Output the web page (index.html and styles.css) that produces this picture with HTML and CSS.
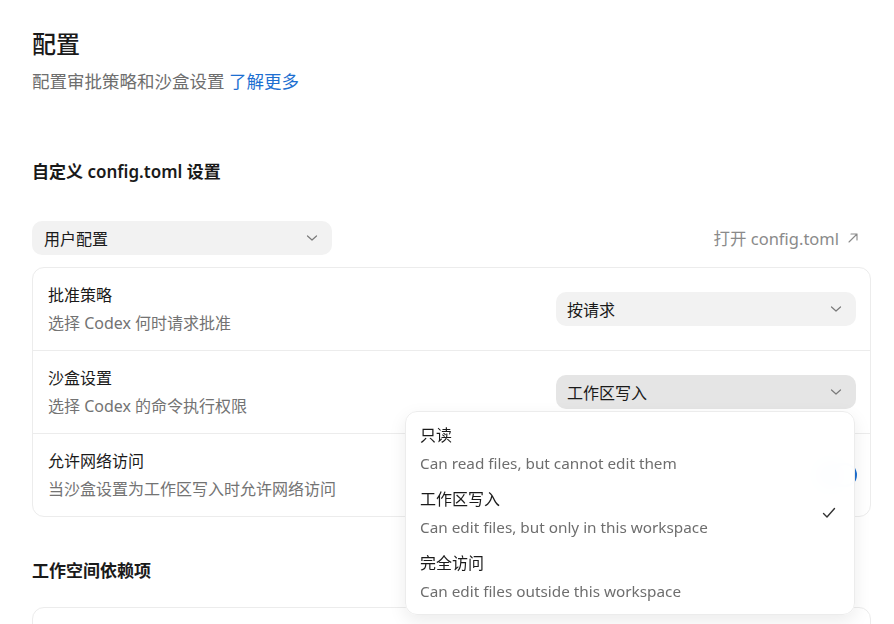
FILE: index.html
```html
<!DOCTYPE html>
<html lang="zh-CN">
<head>
<meta charset="utf-8">
<title>配置</title>
<link rel="stylesheet" href="styles.css">
</head>
<body>
<main class="page">
  <header class="head">
    <h1 class="title">配置</h1>
    <p class="subtitle">配置审批策略和沙盒设置 <a class="link" href="#">了解更多</a></p>
  </header>

  <h2 class="section">自定义 config.toml 设置</h2>

  <div class="toolbar">
    <div class="select select-wide">
      <span>用户配置</span>
      <svg class="chev" viewBox="0 0 12 8" width="12" height="8"><path d="M1.5 2 6 6 10.5 2" fill="none" stroke="currentColor" stroke-width="1.2" stroke-linecap="round" stroke-linejoin="round"/></svg>
    </div>
    <a class="open" href="#">打开 config.toml
      <svg class="arrow" viewBox="0 0 12 12" width="12" height="12"><path d="M2 10 10 2M4 2h6v6" fill="none" stroke="currentColor" stroke-width="1.1" stroke-linecap="round" stroke-linejoin="round"/></svg>
    </a>
  </div>

  <section class="card">
    <div class="row">
      <div class="text">
        <div class="row-title">批准策略</div>
        <div class="row-desc">选择 Codex 何时请求批准</div>
      </div>
      <div class="select">
        <span>按请求</span>
        <svg class="chev" viewBox="0 0 12 8" width="12" height="8"><path d="M1.5 2 6 6 10.5 2" fill="none" stroke="currentColor" stroke-width="1.2" stroke-linecap="round" stroke-linejoin="round"/></svg>
      </div>
    </div>
    <div class="row">
      <div class="text">
        <div class="row-title">沙盒设置</div>
        <div class="row-desc">选择 Codex 的命令执行权限</div>
      </div>
      <div class="select-wrap">
        <div class="select active">
          <span>工作区写入</span>
          <svg class="chev" viewBox="0 0 12 8" width="12" height="8"><path d="M1.5 2 6 6 10.5 2" fill="none" stroke="currentColor" stroke-width="1.2" stroke-linecap="round" stroke-linejoin="round"/></svg>
        </div>
        <div class="menu">
          <div class="item">
            <div class="item-title">只读</div>
            <div class="item-desc">Can read files, but cannot edit them</div>
          </div>
          <div class="item">
            <div class="item-title">工作区写入</div>
            <div class="item-desc">Can edit files, but only in this workspace</div>
            <svg class="check" viewBox="0 0 16 16" width="16" height="16"><path d="M2.5 8.5 6 12 13.5 3.5" fill="none" stroke="currentColor" stroke-width="1.4" stroke-linecap="round" stroke-linejoin="round"/></svg>
          </div>
          <div class="item">
            <div class="item-title">完全访问</div>
            <div class="item-desc">Can edit files outside this workspace</div>
          </div>
        </div>
      </div>
    </div>
    <div class="row">
      <div class="text">
        <div class="row-title">允许网络访问</div>
        <div class="row-desc">当沙盒设置为工作区写入时允许网络访问</div>
      </div>
      <div class="toggle"><span class="knob"></span></div>
    </div>
  </section>

  <h2 class="section section-2">工作空间依赖项</h2>
  <section class="card card-2"></section>
</main>
</body>
</html>
```

FILE: styles.css
```css
* { box-sizing: border-box; }
html, body { margin: 0; padding: 0; background: #fff; }
body {
  font-family: "Noto Sans", "Noto Sans CJK SC", sans-serif;
  color: #1f1f1f;
  font-size: 16px;
  overflow: hidden;
  height: 624px;
}
.page {
  padding: 28px 23px 0 32px;
}
.title {
  margin: 0;
  font-size: 24px;
  line-height: 32px;
  font-weight: 500;
  color: #1a1a1a;
}
.subtitle {
  margin: 9px 0 0;
  font-size: 17.5px;
  line-height: 24px;
  color: #6e6e6e;
}
.link { color: #1d6fd1; text-decoration: none; }
.section {
  margin: 67px 0 0;
  font-size: 17px;
  line-height: 24px;
  font-weight: 600;
  color: #1a1a1a;
}
.section-2 { margin-top: 42px; }
.toolbar {
  margin-top: 37px;
  display: flex;
  align-items: center;
  justify-content: space-between;
  padding-right: 12px;
}
.select {
  width: 300px;
  height: 34px;
  border-radius: 10px;
  background: #f2f2f2;
  display: flex;
  align-items: center;
  justify-content: space-between;
  padding: 0 14px 0 11px;
  font-size: 16px;
  color: #1a1a1a;
}
.select-wide { padding-left: 12px; }
.select.active { background: #e5e5e5; }
.chev { color: #7a7a7a; }
.open {
  color: #8a8a8a;
  text-decoration: none;
  font-size: 16.5px;
  display: flex;
  align-items: center;
  gap: 8px;
}
.arrow { color: #8a8a8a; }
.card {
  margin-top: 12px;
  border: 1px solid #ececec;
  border-radius: 12px;
}
.row {
  display: flex;
  align-items: center;
  justify-content: space-between;
  padding: 16px 14px 16px 15px;
  border-bottom: 1px solid #ececec;
}
.row:last-child { border-bottom: none; }
.row-title { font-size: 16px; line-height: 22px; color: #1a1a1a; }
.row-desc { font-size: 16px; line-height: 22px; margin-top: 6px; color: #737373; }
.select-wrap { position: relative; }
.menu {
  position: absolute;
  top: 36px;
  right: 1px;
  width: 450px;
  padding: 5px 0;
  background: rgba(255, 255, 255, 0.975);
  backdrop-filter: blur(12px);
  border: 1px solid #ececec;
  border-radius: 12px;
  box-shadow: 0 6px 18px rgba(0, 0, 0, 0.08);
  z-index: 10;
}
.item {
  position: relative;
  padding: 7px 15px 7px 14px;
}
.item-title { font-size: 16px; line-height: 22px; color: #1a1a1a; }
.item-desc { font-size: 15.3px; line-height: 22px; margin-top: 6px; color: #6e6e6e; }
.check {
  position: absolute;
  right: 17px;
  top: 50%;
  margin-top: -8px;
  color: #333;
}
.toggle {
  width: 40px;
  height: 24px;
  border-radius: 12px;
  background: #1d6fd1;
  position: relative;
  margin-right: -1px;
}
.knob {
  position: absolute;
  right: 2px;
  top: 2px;
  width: 20px;
  height: 20px;
  border-radius: 50%;
  background: #fff;
}
.card-2 { margin-top: 24px; height: 60px; }
```
